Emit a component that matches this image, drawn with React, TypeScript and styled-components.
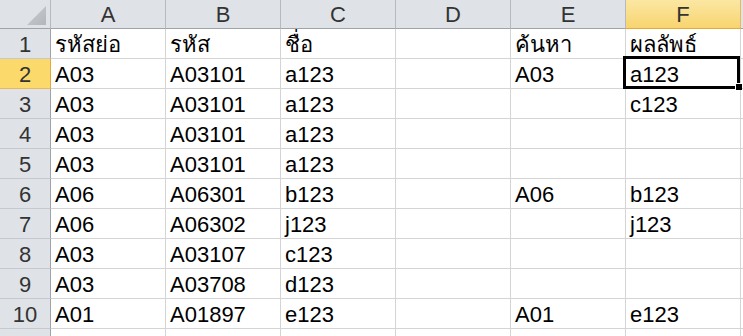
import React from "react";
import styled, { createGlobalStyle, css } from "styled-components";

const Global = createGlobalStyle`
  html, body { margin: 0; padding: 0; background: #ffffff; }
  body { width: 743px; height: 336px; overflow: hidden; }
`;

const Sheet = styled.div`
  position: relative;
  width: 743px;
  height: 336px;
  overflow: hidden;
  display: grid;
  grid-template-columns: 51px repeat(6, 115px) 115px;
  grid-template-rows: 29px repeat(11, 30px);
  font-family: "Liberation Sans", Tahoma, "Noto Sans", sans-serif;
  font-size: 22px;
  background: #ffffff;
`;

const Corner = styled.div`
  position: relative;
  background: #dfe2e6;
  border-right: 1px solid #b6babf;
  border-bottom: 1px solid #9fa4ab;
  display: flex;
  align-items: flex-end;
  justify-content: flex-end;
  padding: 0 4px 3px 0;
  box-sizing: border-box;
`;

const ColHeader = styled.div<{ $active?: boolean }>`
  box-sizing: border-box;
  display: flex;
  align-items: center;
  justify-content: center;
  padding-top: 2px;
  color: #333333;
  background: #dfe2e6;
  border-right: 1px solid #b6babf;
  border-bottom: 1px solid #9fa4ab;
  ${(p) =>
    p.$active &&
    css`
      background: linear-gradient(#fbe7a3, #f8d46f);
      border-right-color: #e7b95c;
      border-bottom-color: #e4a93a;
    `}
`;

const RowHeader = styled.div<{ $active?: boolean }>`
  box-sizing: border-box;
  display: flex;
  align-items: center;
  justify-content: center;
  padding-top: 2px;
  color: #333333;
  background: #dfe2e6;
  border-right: 1px solid #9fa4ab;
  border-bottom: 1px solid #c5c9ce;
  ${(p) =>
    p.$active &&
    css`
      background: #fcd96b;
      border-right-color: #e4a93a;
      border-bottom-color: #e7b95c;
    `}
`;

const Cell = styled.div`
  box-sizing: border-box;
  display: flex;
  align-items: flex-end;
  padding: 0 0 2px 4px;
  line-height: 22px;
  color: #000000;
  white-space: nowrap;
  border-right: 1px solid #d4d4d4;
  border-bottom: 1px solid #d4d4d4;
`;

const Selection = styled.div`
  position: absolute;
  left: 623px;
  top: 56px;
  width: 117px;
  height: 33px;
  box-sizing: border-box;
  border: 3px solid #000000;
  pointer-events: none;
`;

const FillHandle = styled.div`
  position: absolute;
  right: -5px;
  bottom: -4px;
  width: 6px;
  height: 6px;
  background: #000000;
  border-left: 1px solid #ffffff;
  border-top: 1px solid #ffffff;
`;

const cols = ["A", "B", "C", "D", "E", "F", ""];

const rows: string[][] = [
  ["รหัสย่อ", "รหัส", "ชื่อ", "", "ค้นหา", "ผลลัพธ์", ""],
  ["A03", "A03101", "a123", "", "A03", "a123", ""],
  ["A03", "A03101", "a123", "", "", "c123", ""],
  ["A03", "A03101", "a123", "", "", "", ""],
  ["A03", "A03101", "a123", "", "", "", ""],
  ["A06", "A06301", "b123", "", "A06", "b123", ""],
  ["A06", "A06302", "j123", "", "", "j123", ""],
  ["A03", "A03107", "c123", "", "", "", ""],
  ["A03", "A03708", "d123", "", "", "", ""],
  ["A01", "A01897", "e123", "", "A01", "e123", ""],
  ["", "", "", "", "", "", ""],
];

export default function App() {
  return (
    <>
      <Global />
      <Sheet>
        <Corner>
          <svg width="19" height="19" viewBox="0 0 19 19">
            <defs>
              <linearGradient id="tri" x1="0" y1="0" x2="1" y2="1">
                <stop offset="0" stopColor="#c9cdd2" />
                <stop offset="1" stopColor="#b3b7bc" />
              </linearGradient>
            </defs>
            <polygon points="19,0 19,19 0,19" fill="url(#tri)" />
          </svg>
        </Corner>
        {cols.map((c, i) => (
          <ColHeader key={i} $active={c === "F"}>
            {c}
          </ColHeader>
        ))}
        {rows.map((r, i) => (
          <React.Fragment key={i}>
            <RowHeader $active={i === 1}>{i < 10 ? i + 1 : ""}</RowHeader>
            {r.map((v, j) => (
              <Cell key={j}>{v}</Cell>
            ))}
          </React.Fragment>
        ))}
        <Selection>
          <FillHandle />
        </Selection>
      </Sheet>
    </>
  );
}
